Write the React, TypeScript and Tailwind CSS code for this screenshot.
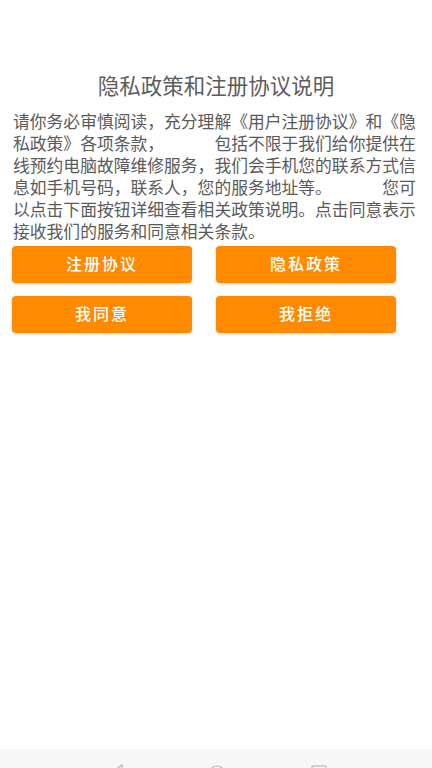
import React from "react";

const font = { fontFamily: '"Liberation Sans", "Noto Sans CJK SC", sans-serif' };

export default function App() {
  const buttons = [
    ["注册协议", "隐私政策"],
    ["我同意", "我拒绝"],
  ];

  return (
    <div className="flex h-[768px] w-[432px] flex-col bg-white" style={font}>
      <div className="flex-1">
        {/* Title */}
        <h1 className="mt-[73px] text-center text-[21.5px] leading-[28px] font-normal text-[#5c5c5c]">
          隐私政策和注册协议说明
        </h1>

        {/* Description */}
        <p className="mt-[11px] ml-[13px] w-[410px] text-[16.8px] leading-[22px] text-[#5a5a5a] [text-spacing-trim:space-all]">
          请你务必审慎阅读，充分理解《用户注册协议》和《隐私政策》各项条款，　　　包括不限于我们给你提供在线预约电脑故障维修服务，我们会手机您的联系方式信息如手机号码，联系人，您的服务地址等。　　　您可以点击下面按钮详细查看相关政策说明。点击同意表示接收我们的服务和同意相关条款。
        </p>

        {/* Buttons */}
        <div className="mt-[2px] flex flex-col gap-[13px] px-3">
          {buttons.map((row, i) => (
            <div key={i} className="flex gap-6">
              {row.map((label) => (
                <button
                  key={label}
                  className="flex h-[37px] w-[180px] items-center justify-center rounded-[4px] bg-[#ff8a00] text-[16px] font-medium tracking-[2px] text-white shadow-[0_1px_3px_rgba(0,0,0,0.18)]"
                >
                  {label}
                </button>
              ))}
            </div>
          ))}
        </div>
      </div>

      {/* System navigation bar (cut off) */}
      <div className="relative h-[19px] overflow-hidden bg-[#f7f7f7]">
        <svg className="absolute left-[108px] top-[14px]" width="18" height="18" viewBox="0 0 18 18">
          <path d="M14 2 L4 9 L14 16 Z" fill="none" stroke="#c4c4c4" strokeWidth="1.6" strokeLinejoin="round" />
        </svg>
        <svg className="absolute left-[207px] top-[15px]" width="20" height="20" viewBox="0 0 20 20">
          <circle cx="10" cy="10" r="8" fill="none" stroke="#c4c4c4" strokeWidth="1.6" />
        </svg>
        <svg className="absolute left-[310px] top-[16px]" width="18" height="18" viewBox="0 0 18 18">
          <rect x="2" y="1" width="14" height="14" rx="1" fill="none" stroke="#c4c4c4" strokeWidth="1.6" />
        </svg>
      </div>
    </div>
  );
}
